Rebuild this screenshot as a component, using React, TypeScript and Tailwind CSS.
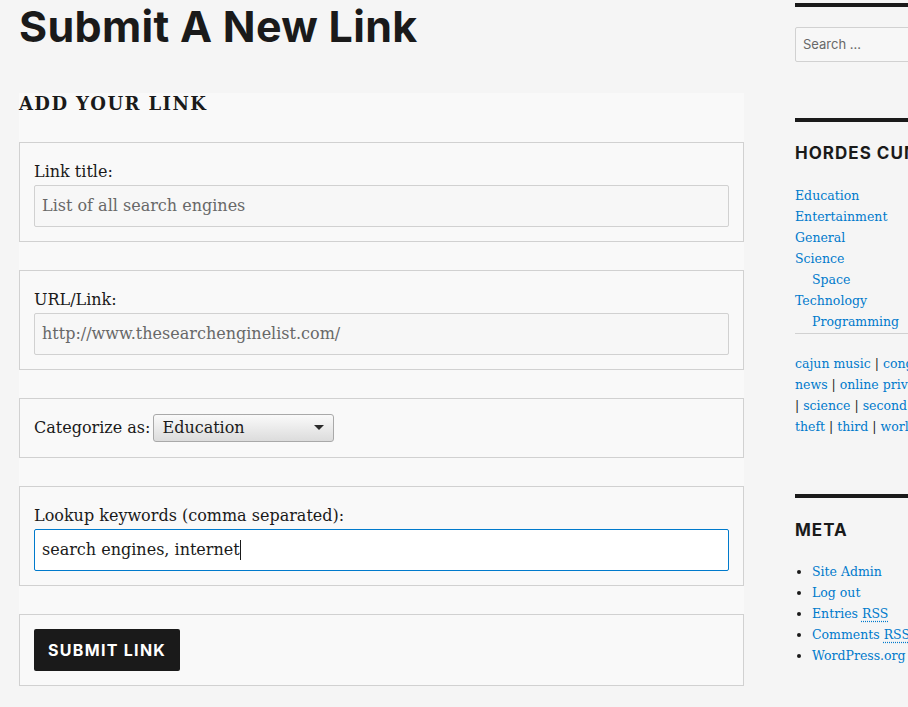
import React from 'react'

const serif = { fontFamily: '"DejaVu Serif", "Liberation Serif", serif' }
const sans = { fontFamily: 'Inter, "Noto Sans", sans-serif' }

const categories = [
    { name: 'Education', sub: false },
    { name: 'Entertainment', sub: false },
    { name: 'General', sub: false },
    { name: 'Science', sub: false },
    { name: 'Space', sub: true },
    { name: 'Technology', sub: false },
    { name: 'Programming', sub: true },
]

// "|" entries are separators, everything else is a tag link
const tagLines = [
    ['cajun music', '|', 'congress', '|', 'fake'],
    ['news', '|', 'online privacy', '|', 'privacy'],
    ['|', 'science', '|', 'second', '|', 'identity'],
    ['theft', '|', 'third', '|', 'world'],
]

function Field({ label, value }: { label: string; value: string }) {
    return (
        <fieldset className="border border-[#d1d1d1] px-[14px] pt-[17px] pb-[14px]">
            <label className="block text-[16px] leading-[24px] text-[#1a1a1a]" style={serif}>{label}</label>
            <div
                className="mt-[1px] h-[42px] flex items-center px-[7px] bg-[#f7f7f7] border border-[#d1d1d1] rounded-[2px] text-[16px] text-[#686868]"
                style={serif}
            >
                {value}
            </div>
        </fieldset>
    )
}

function WidgetTitle({ children }: { children: React.ReactNode }) {
    return (
        <h2 className="text-[17px] font-bold uppercase tracking-[0.06em] text-[#1a1a1a] leading-[20px] whitespace-nowrap" style={sans}>
            {children}
        </h2>
    )
}

export default function App() {
    return (
        <div className="w-full min-h-[707px] bg-[#f5f5f5] overflow-hidden">
            <div className="flex pl-[19px]">
                <main className="w-[725px] shrink-0">
                    <h1 className="text-[43px] leading-[52px] font-bold tracking-[0.3px] text-[#1a1a1a]" style={sans}>
                        Submit A New Link
                    </h1>

                    <form className="mt-[41px] bg-[#f9f9f9] flex flex-col gap-[28px]">
                        <h3
                            className="text-[18px] leading-[22px] font-bold uppercase tracking-[1.4px] text-[#1a1a1a] -mb-[1px]"
                            style={serif}
                        >
                            Add Your Link
                        </h3>

                        <Field label="Link title:" value="List of all search engines" />
                        <Field label="URL/Link:" value="http://www.thesearchenginelist.com/" />

                        <fieldset className="border border-[#d1d1d1] px-[14px] py-[15px] flex items-center">
                            <span className="text-[16px] text-[#1a1a1a] mr-[3px]" style={serif}>Categorize as:</span>
                            <div className="w-[181px] h-[28px] flex items-center justify-between pl-[8px] pr-[9px] border border-[#a9a9a9] rounded-[3px] bg-gradient-to-b from-[#fafafa] to-[#dcdcdc] text-[16px] text-[#1a1a1a]" style={serif}>
                                <span>Education</span>
                                <svg width="10" height="6" viewBox="0 0 10 6">
                                    <path d="M0 0 L10 0 L5 5 Z" fill="#2a2a2a" />
                                </svg>
                            </div>
                        </fieldset>

                        <fieldset className="border border-[#d1d1d1] px-[14px] pt-[17px] pb-[14px]">
                            <label className="block text-[16px] leading-[24px] text-[#1a1a1a]" style={serif}>Lookup keywords (comma separated):</label>
                            <div
                                className="mt-[1px] h-[42px] flex items-center px-[7px] bg-white border border-[#007acc] rounded-[2px] text-[16px] text-[#1a1a1a]"
                                style={serif}
                            >
                                search engines, internet
                                <span className="inline-block w-[1px] h-[20px] bg-[#1a1a1a]"></span>
                            </div>
                        </fieldset>

                        <fieldset className="border border-[#d1d1d1] px-[14px] py-[14px]">
                            <button
                                type="button"
                                className="h-[42px] px-[14px] bg-[#1a1a1a] text-white rounded-[2px] text-[16px] font-bold uppercase tracking-[1.3px]"
                                style={sans}
                            >
                                Submit Link
                            </button>
                        </fieldset>
                    </form>
                </main>

                <aside className="ml-[51px] w-[300px] shrink-0">
                    <section className="mt-[3px] border-t-4 border-[#1a1a1a] pt-[20px]">
                        <div className="h-[35px] flex items-center px-[7px] bg-[#f7f7f7] border border-[#d1d1d1] rounded-[2px] text-[13px] text-[#686868]" style={sans}>
                            Search …
                        </div>
                    </section>

                    <section className="mt-[56px] border-t-4 border-[#1a1a1a] pt-[21px]">
                        <WidgetTitle>Hordes Cumulus</WidgetTitle>
                        <ul className="mt-[22px] border-b border-[#d1d1d1] pb-[1px]">
                            {categories.map((c) => (
                                <li
                                    key={c.name}
                                    className={`text-[12.5px] leading-[21px] text-[#007acc] ${c.sub ? 'pl-[17px]' : ''}`}
                                    style={serif}
                                >
                                    {c.name}
                                </li>
                            ))}
                        </ul>
                        <div className="mt-[19px]">
                            {tagLines.map((line, i) => (
                                <div key={i} className="text-[12.5px] leading-[21px] whitespace-nowrap" style={serif}>
                                    {line.map((t, j) =>
                                        t === '|' ? (
                                            <span key={j} className="text-[#1a1a1a]">{j === 0 ? '| ' : ' | '}</span>
                                        ) : (
                                            <span key={j} className="text-[#007acc]">{t}</span>
                                        )
                                    )}
                                </div>
                            ))}
                        </div>
                    </section>

                    <section className="mt-[57px] border-t-4 border-[#1a1a1a] pt-[22px]">
                        <WidgetTitle>Meta</WidgetTitle>
                        <ul className="mt-[21px] list-disc pl-[17px] marker:text-[#1a1a1a]">
                            <li className="text-[12.5px] leading-[21px] text-[#007acc]" style={serif}>Site Admin</li>
                            <li className="text-[12.5px] leading-[21px] text-[#007acc]" style={serif}>Log out</li>
                            <li className="text-[12.5px] leading-[21px] text-[#007acc]" style={serif}>
                                Entries <abbr className="underline decoration-dotted underline-offset-[3px]">RSS</abbr>
                            </li>
                            <li className="text-[12.5px] leading-[21px] text-[#007acc]" style={serif}>
                                Comments <abbr className="underline decoration-dotted underline-offset-[3px]">RSS</abbr>
                            </li>
                            <li className="text-[12.5px] leading-[21px] text-[#007acc]" style={serif}>WordPress.org</li>
                        </ul>
                    </section>
                </aside>
            </div>
        </div>
    )
}
